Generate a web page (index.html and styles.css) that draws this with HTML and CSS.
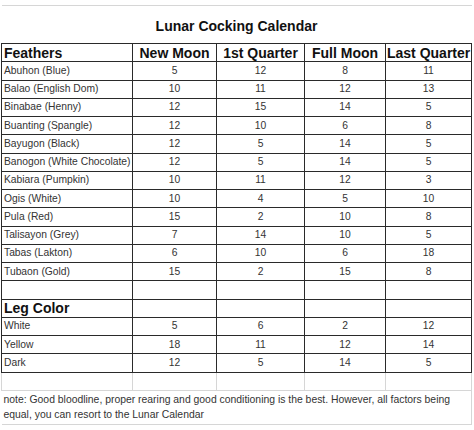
FILE: index.html
```html
<!DOCTYPE html>
<html>
<head>
<meta charset="utf-8">
<link rel="stylesheet" href="styles.css">
</head>
<body>
<table class="cal">
  <colgroup>
    <col class="c1"><col class="c2"><col class="c3"><col class="c4"><col class="c5">
  </colgroup>
  <tr class="title-row"><td colspan="5" class="title">Lunar Cocking Calendar</td></tr>
  <tr class="head">
    <th class="name">Feathers</th><th>New Moon</th><th>1st Quarter</th><th>Full Moon</th><th>Last Quarter</th>
  </tr>
  <tr><td class="name">Abuhon (Blue)</td><td>5</td><td>12</td><td>8</td><td>11</td></tr>
  <tr><td class="name">Balao (English Dom)</td><td>10</td><td>11</td><td>12</td><td>13</td></tr>
  <tr><td class="name">Binabae (Henny)</td><td>12</td><td>15</td><td>14</td><td>5</td></tr>
  <tr><td class="name">Buanting (Spangle)</td><td>12</td><td>10</td><td>6</td><td>8</td></tr>
  <tr><td class="name">Bayugon (Black)</td><td>12</td><td>5</td><td>14</td><td>5</td></tr>
  <tr><td class="name">Banogon (White Chocolate)</td><td>12</td><td>5</td><td>14</td><td>5</td></tr>
  <tr><td class="name">Kabiara (Pumpkin)</td><td>10</td><td>11</td><td>12</td><td>3</td></tr>
  <tr><td class="name">Ogis (White)</td><td>10</td><td>4</td><td>5</td><td>10</td></tr>
  <tr><td class="name">Pula (Red)</td><td>15</td><td>2</td><td>10</td><td>8</td></tr>
  <tr><td class="name">Talisayon (Grey)</td><td>7</td><td>14</td><td>10</td><td>5</td></tr>
  <tr><td class="name">Tabas (Lakton)</td><td>6</td><td>10</td><td>6</td><td>18</td></tr>
  <tr><td class="name">Tubaon (Gold)</td><td>15</td><td>2</td><td>15</td><td>8</td></tr>
  <tr><td></td><td></td><td></td><td></td><td></td></tr>
  <tr class="head"><th class="name">Leg Color</th><td></td><td></td><td></td><td></td></tr>
  <tr><td class="name">White</td><td>5</td><td>6</td><td>2</td><td>12</td></tr>
  <tr><td class="name">Yellow</td><td>18</td><td>11</td><td>12</td><td>14</td></tr>
  <tr><td class="name">Dark</td><td>12</td><td>5</td><td>14</td><td>5</td></tr>
  <tr class="blank"><td></td><td></td><td></td><td></td><td></td></tr>
  <tr class="note-row"><td colspan="5" class="note">note: Good bloodline, proper rearing and good conditioning is the best. However, all factors being equal, you can resort to the Lunar Calendar</td></tr>
</table>
</body>
</html>
```

FILE: styles.css
```css
html, body {
  margin: 0;
  padding: 0;
  background: #ffffff;
}
body {
  padding: 5px 0 0 1px;
  font-family: "Liberation Sans", Arial, sans-serif;
  color: #333333;
}
.cal {
  border-collapse: collapse;
  table-layout: fixed;
  width: 470px;
}
.c1 { width: 131px; }
.c2 { width: 84px; }
.c3 { width: 88px; }
.c4 { width: 81px; }
.c5 { width: 86px; }
.cal tr {
  height: 18.25px;
}
.cal td, .cal th {
  border: 1px solid #2a2a2a;
  padding: 0 2px;
  text-align: center;
  vertical-align: middle;
  font-size: 10.3px;
  line-height: 12px;
  white-space: nowrap;
  overflow: hidden;
}
.cal .name {
  text-align: left;
}
.cal th {
  font-size: 14px;
  font-weight: bold;
  color: #111111;
  line-height: 16px;
  padding: 0 1px;
}
.cal th.name {
  padding-left: 2px;
}
.cal .title-row {
  height: 38px;
}
.cal .title {
  border: none;
  border-top: 1px solid #d6d6d6;
  font-size: 14px;
  font-weight: bold;
  color: #111111;
  padding-top: 2px;
}
.cal .blank td {
  border-left-color: #d6d6d6;
  border-right-color: #d6d6d6;
  border-bottom-color: #d6d6d6;
}
.cal .note-row {
  height: 34px;
}
.cal .note {
  border: none;
  border-top: 1px solid #d6d6d6;
  border-bottom: 1px solid #d6d6d6;
  border-right: 1px solid #d6d6d6;
  text-align: left;
  white-space: normal;
  font-size: 10.4px;
  line-height: 15px;
  padding: 1px 2px 2px 2px;
  vertical-align: top;
}
```
